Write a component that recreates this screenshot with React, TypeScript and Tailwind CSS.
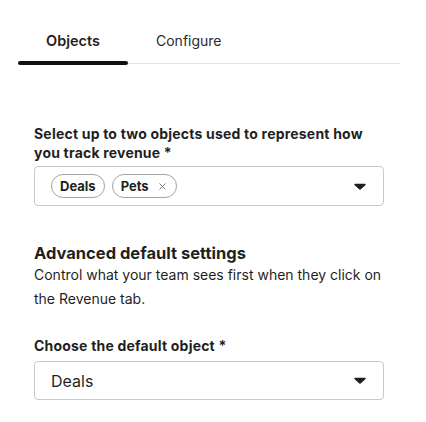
import { X } from "lucide-react";

function Caret() {
  return (
    <svg width="12" height="7" viewBox="0 0 12 7" className="shrink-0">
      <path d="M1 0.8h10a0.8 0.8 0 0 1 0.6 1.3L6.6 6.4a0.8 0.8 0 0 1-1.2 0L0.4 2.1A0.8 0.8 0 0 1 1 0.8z" fill="#1f1f1f" />
    </svg>
  );
}

function Chip({ label, removable }: { label: string; removable?: boolean }) {
  return (
    <span className="inline-flex h-6 items-center gap-[8px] rounded-full border border-[#a3a3a3] bg-white px-[8px] text-[13px] font-bold leading-none text-[#1f1f1f]">
      <span>{label}</span>
      {removable && <X className="size-[11px] text-[#555]" strokeWidth={1.6} />}
    </span>
  );
}

export default function App() {
  return (
    <div
      className="h-[422px] w-[426px] bg-white text-[#1f1f1f]"
      style={{ fontFamily: "Inter, 'Noto Sans', sans-serif" }}
    >
      <div className="px-[18px] pt-[31px]">
        <div className="flex w-[382px] border-b border-[#e3e3e3]">
          <button className="relative px-[28px] pb-[12px] text-[14.5px] font-semibold leading-5">
            Objects
            <span className="absolute inset-x-0 bottom-[-2px] h-[4px] rounded-full bg-[#111]" />
          </button>
          <button className="px-[28px] pb-[12px] text-[14px] leading-5 text-[#2a2a2a]">
            Configure
          </button>
        </div>
      </div>

      <div className="px-[34px] pt-[60px]">
        <label className="block w-[340px] text-[14px] font-bold leading-[19px] tracking-[0.2px]">
          Select up to two objects used to represent how you track revenue *
        </label>
        <div className="mt-[4px] flex h-[40px] w-[350px] items-center justify-between rounded-[4px] border border-[#c9c9c9] pl-[16px] pr-[17px]">
          <div className="flex gap-[7px]">
            <Chip label="Deals" />
            <Chip label="Pets" removable />
          </div>
          <Caret />
        </div>

        <h2 className="mt-[37px] text-[16.5px] font-bold leading-[20px]">Advanced default settings</h2>
        <p className="text-[14px] leading-6">
          Control what your team sees first when they click on the Revenue tab.
        </p>

        <label className="mt-[25px] block text-[14px] font-bold leading-[19px] tracking-[0.2px]">
          Choose the default object *
        </label>
        <div className="mt-[6px] flex h-[39px] w-[350px] items-center justify-between rounded-[4px] border border-[#c9c9c9] pl-[16px] pr-[17px]">
          <span className="text-[16px]">Deals</span>
          <Caret />
        </div>
      </div>
    </div>
  );
}
